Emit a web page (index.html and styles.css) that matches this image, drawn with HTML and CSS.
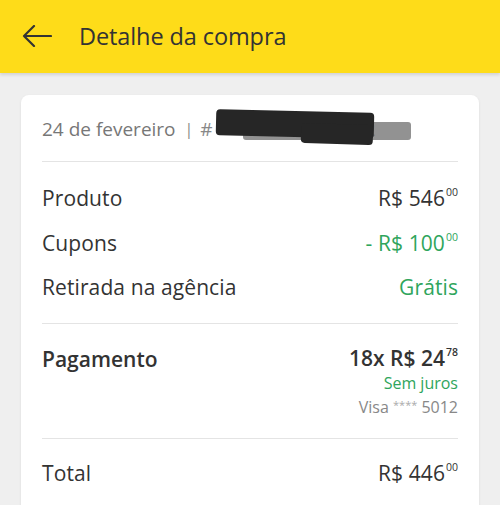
FILE: index.html
```html
<!DOCTYPE html>
<html lang="pt-BR">
<head>
<meta charset="utf-8">
<link rel="stylesheet" href="styles.css">
</head>
<body>
<header class="topbar">
  <svg class="back" width="30" height="22" viewBox="0 0 30 22" aria-hidden="true">
    <path d="M29 11H2M12 1L2 11l10 10" fill="none" stroke="#333" stroke-width="2.2" stroke-linecap="round" stroke-linejoin="round"/>
  </svg>
  <h1 class="title">Detalhe da compra</h1>
</header>
<main class="content">
  <section class="card">
    <div class="meta">
      <span class="date">24 de fevereiro</span>
      <span class="sep">|</span>
      <span class="order">#<span class="redact-wrap"><span class="hidden-id">2000000000000</span><span class="redact-shadow"></span><span class="redact"></span><span class="redact redact-b"></span></span><span class="tail">12</span></span>
    </div>
    <div class="items">
      <div class="row"><span class="label">Produto</span><span class="value">R$ 546<sup>00</sup></span></div>
      <div class="row"><span class="label">Cupons</span><span class="value green">- R$ 100<sup>00</sup></span></div>
      <div class="row"><span class="label">Retirada na agência</span><span class="value green">Grátis</span></div>
    </div>
    <div class="payment">
      <span class="label strong">Pagamento</span>
      <div class="pay-info">
        <span class="value strong">18x R$ 24<sup>78</sup></span>
        <span class="small green">Sem juros</span>
        <span class="small muted">Visa <span class="stars">****</span> 5012</span>
      </div>
    </div>
    <div class="total row">
      <span class="label">Total</span><span class="value">R$ 446<sup>00</sup></span>
    </div>
  </section>
</main>
</body>
</html>
```
FILE: styles.css
```css
* { box-sizing: border-box; }
html, body { margin: 0; padding: 0; }
body {
  background: #efefef;
  font-family: "Open Sans", "Liberation Sans", sans-serif;
  color: #333;
  width: 500px;
  height: 505px;
  overflow: hidden;
}
.topbar {
  height: 73px;
  background: #fedc19;
  display: flex;
  align-items: center;
  padding-left: 22px;
  box-shadow: 0 2px 3px rgba(0,0,0,0.12);
  position: relative;
  z-index: 1;
}
.back { display: block; margin-top: -1px; }
.title {
  margin: 0 0 2px 27px;
  font-size: 23.5px;
  font-weight: 400;
  letter-spacing: -0.1px;
  color: #333;
}
.content { padding: 22px 21px 0; }
.card {
  background: #fff;
  border-radius: 8px;
  box-shadow: 0 1px 3px rgba(0,0,0,0.08);
  padding: 0 21px 14px;
  height: 420px;
}
.meta {
  height: 67px;
  display: flex;
  align-items: center;
  border-bottom: 1px solid #e4e4e4;
  font-size: 19px;
  color: #777;
  letter-spacing: 0;
  padding-top: 1px;
}
.sep { margin: 0 7px 0 9px; font-size: 16px; color: #888; }
.order { display: flex; align-items: center; color: #888; }
.tail { color: #999; position: relative; z-index: 0; }
.redact-wrap { position: relative; display: inline-block; }
.hidden-id { visibility: hidden; }
.redact {
  position: absolute;
  left: 3px; top: -5px;
  width: 158px; height: 26px;
  background: #262626;
  border-radius: 4px;
  transform: rotate(1.3deg);
  z-index: 3;
}
.redact-b {
  left: 88px; top: 8px;
  width: 72px; height: 20px;
  transform: rotate(2deg);
}
.redact-shadow {
  position: absolute;
  left: 30px; top: 6px;
  width: 168px; height: 18px;
  background: rgba(110,110,110,0.75);
  border-radius: 3px;
  z-index: 2;
}
.items {
  border-bottom: 1px solid #e4e4e4;
  padding: 14px 0 13px;
}
.row {
  display: flex;
  justify-content: space-between;
  align-items: center;
  height: 44.5px;
  font-size: 21px;
  letter-spacing: 0.1px;
}
.value { white-space: nowrap; }
sup {
  font-size: 10.5px;
  vertical-align: 10px;
  line-height: 0;
  margin-left: 1px;
  letter-spacing: 0;
}
.green { color: #2fa55c; }
.payment {
  border-bottom: 1px solid #e4e4e4;
  display: flex;
  justify-content: space-between;
  align-items: flex-start;
  height: 115px;
  padding-top: 21px;
  font-size: 21px;
  letter-spacing: 0;
}
.strong { font-weight: 600; }
.pay-info {
  display: flex;
  flex-direction: column;
  align-items: flex-end;
}
.pay-info .value { line-height: 27px; }
.small { font-size: 16px; line-height: 22px; letter-spacing: 0; }
.muted { color: #888; }
.stars { font-size: 11px; vertical-align: 4px; color: #aaa; }
.total { height: 69px; padding-top: 0; }
```
